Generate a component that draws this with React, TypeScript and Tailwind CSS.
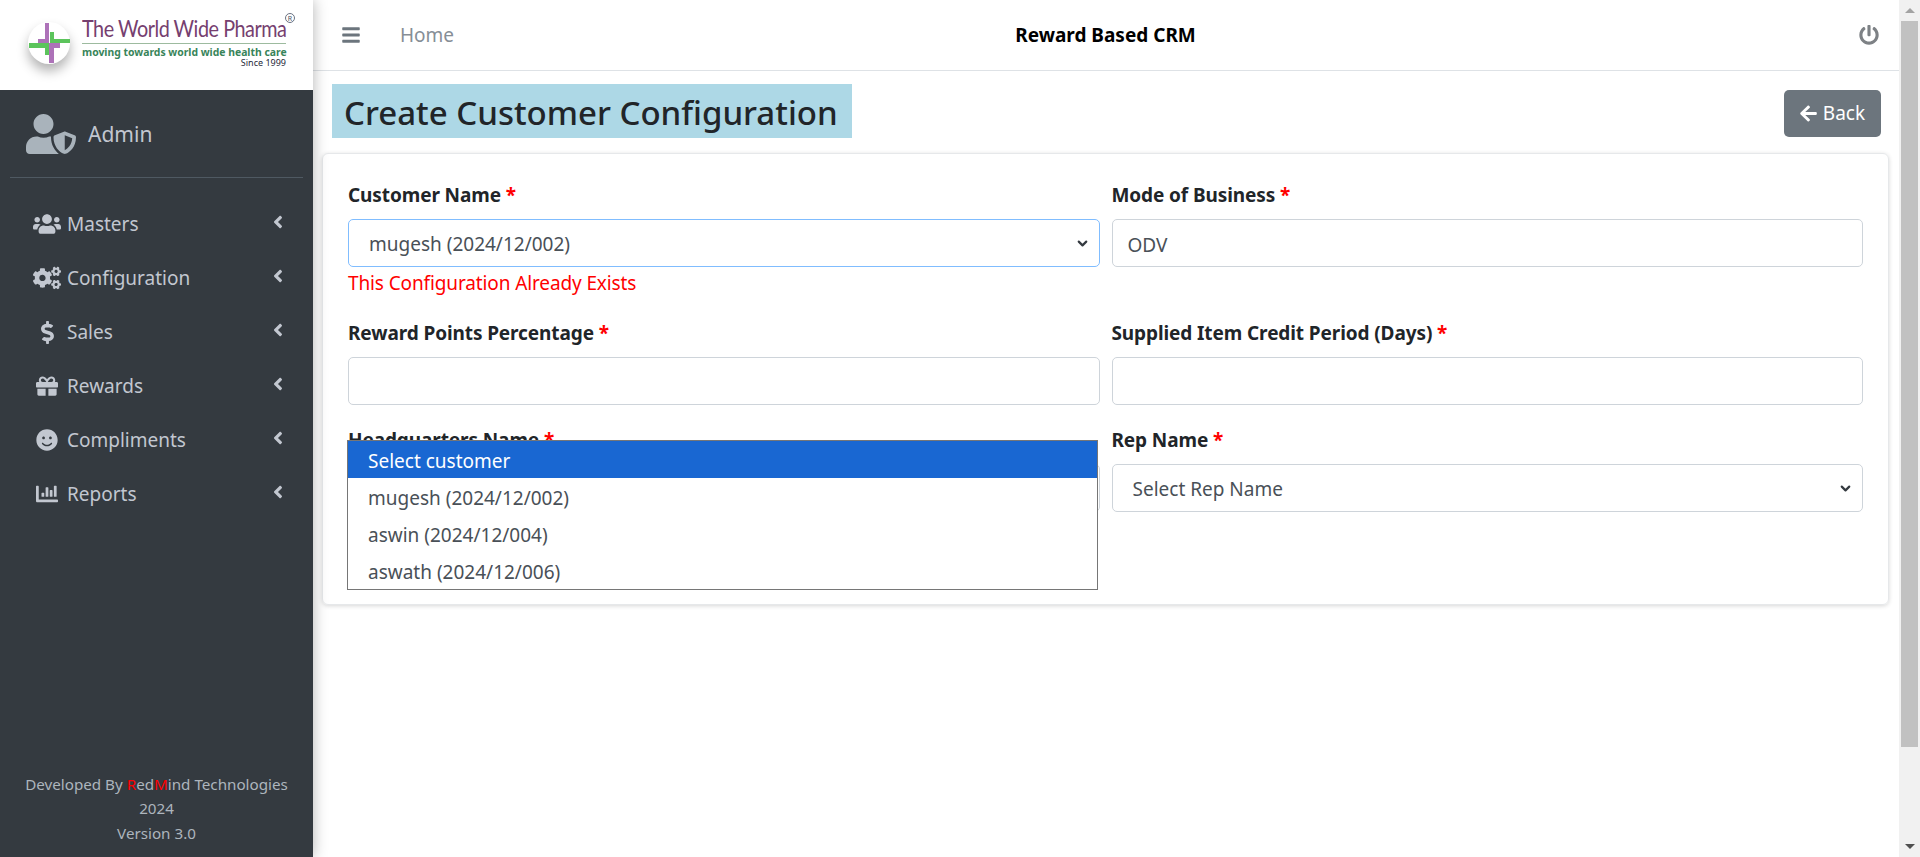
import { ChevronDown } from "lucide-react";
import {
  FaAngleLeft,
  FaArrowLeft,
  FaBars,
  FaChartBar,
  FaCogs,
  FaDollarSign,
  FaGift,
  FaPowerOff,
  FaSmile,
  FaUserShield,
  FaUsers,
} from "react-icons/fa";
import type { IconType } from "react-icons";

const NAV_ITEMS: { label: string; icon: IconType; size: string }[] = [
  { label: "Masters", icon: FaUsers, size: "text-[28px]" },
  { label: "Configuration", icon: FaCogs, size: "text-[28px]" },
  { label: "Sales", icon: FaDollarSign, size: "text-[23px]" },
  { label: "Rewards", icon: FaGift, size: "text-[22px]" },
  { label: "Compliments", icon: FaSmile, size: "text-[22px]" },
  { label: "Reports", icon: FaChartBar, size: "text-[22px]" },
];

const CUSTOMER_OPTIONS = [
  "Select customer",
  "mugesh (2024/12/002)",
  "aswin (2024/12/004)",
  "aswath (2024/12/006)",
];

function Logo() {
  return (
    <div className="flex h-[90px] shrink-0 items-start bg-white pl-[28px] pt-[15px]">
      <div className="mt-[7px] h-[42px] w-[42px] shrink-0 rounded-full bg-white shadow-[0_7px_12px_rgba(0,0,0,0.3)]">
        <svg viewBox="0 0 42 42" className="h-[42px] w-[42px]">
          <rect x="17" y="1" width="4" height="20" fill="#ad72b8" />
          <rect x="21" y="21" width="5" height="20" fill="#ad72b8" />
          <rect x="10" y="17" width="11" height="4" fill="#ad72b8" />
          <rect x="21" y="21" width="11" height="5" fill="#ad72b8" />
          <rect x="22" y="10" width="4" height="11" fill="#5cc45c" />
          <rect x="22" y="17" width="20" height="4" fill="#5cc45c" />
          <rect x="1" y="21" width="20" height="5" fill="#5cc45c" />
          <rect x="17" y="26" width="4" height="7" fill="#5cc45c" />
        </svg>
      </div>
      <div className="ml-[12px] w-[204px]">
        <div className="relative h-[26px]">
          {/* logo wordmark is a condensed face, so squeeze the closest one */}
          <span className="block origin-left scale-x-[0.843] whitespace-nowrap font-['Lato',sans-serif] text-[23.500px] leading-[26px] tracking-[-0.55px] text-[#76406f]">
            The World Wide Pharma
          </span>
          <span className="absolute -right-[9px] -top-[2px] flex h-[10px] w-[10px] items-center justify-center rounded-full border border-gray-500 text-[7px] leading-none text-gray-600">
            R
          </span>
        </div>
        <div className="mt-[2px] border-t border-[#9dbb9f] pt-[1px] text-[10.400px] font-bold leading-[14px] whitespace-nowrap text-[#38845a]">
          moving towards world wide health care
        </div>
        <div className="-mt-[1px] text-right text-[9px] leading-[9px] text-gray-800">Since 1999</div>
      </div>
    </div>
  );
}

function Sidebar() {
  return (
    <aside className="z-10 flex w-[313px] shrink-0 flex-col bg-[#343a40] shadow-[0_0_14px_rgba(0,0,0,0.3)]">
      <Logo />
      {/* User */}
      <div className="mx-[10px] flex h-[88px] items-center border-b border-[#4f5962] pl-[16px]">
        <FaUserShield className="text-[50px] text-[#a9b3bb]" />
        <span className="ml-[12px] pt-[2px] text-[21px] text-[#c2c7d0]">Admin</span>
      </div>

      {/* Nav */}
      <nav className="mt-[19px] flex flex-col">
        {NAV_ITEMS.map((item) => (
          <div key={item.label} className="flex h-[54px] items-center pl-[33px] pr-[25px] text-[#c2c7d0]">
            <span className="flex w-[28px] justify-center">
              <item.icon className={item.size} />
            </span>
            <span className="ml-[6px] flex-1 text-[19px]">{item.label}</span>
            <FaAngleLeft className="-mt-[4px] text-[20px]" />
          </div>
        ))}
      </nav>

      {/* Footer */}
      <div className="mt-auto pb-[12px] text-center text-[15.200px] leading-[24.500px] text-[#adb5bd]">
        <div>
          Developed By <span className="text-[#ff0000]">R</span>ed<span className="text-[#ff0000]">M</span>ind Technologies
        </div>
        <div>2024</div>
        <div>Version 3.0</div>
      </div>
    </aside>
  );
}

function FieldLabel({ text }: { text: string }) {
  return (
    <label className="block h-[24px] text-[19px] font-bold leading-[24px] tracking-[-0.1px] text-[#212529]">
      {text} <span className="text-[#ff0000]">*</span>
    </label>
  );
}

function SelectBox({ value, focused }: { value?: string; focused?: boolean }) {
  return (
    <div
      className={`flex h-[48px] items-center justify-between rounded-[5px] border bg-white pl-[20px] pr-[9px] text-[19px] text-[#495057] ${
        focused ? "border-[#80bdff]" : "border-[#ced4da]"
      }`}
    >
      <span className="pt-[2px]">{value}</span>
      <ChevronDown size={15} strokeWidth={3.500} className="text-[#343a40]" />
    </div>
  );
}

function TextBox({ value }: { value?: string }) {
  return (
    <input
      readOnly
      value={value ?? ""}
      className="block h-[48px] w-full rounded-[5px] border border-[#ced4da] bg-white px-[15px] pt-[3px] text-[19px] text-[#495057] outline-none"
    />
  );
}

function CustomerDropdown() {
  return (
    <div className="absolute -left-[1px] right-[2px] top-[12px] z-20 border border-[#767676] bg-white text-[19px] text-[#495057]">
      {CUSTOMER_OPTIONS.map((option, index) => (
        <div
          key={option}
          className={`flex h-[37px] items-center pl-[20px] pt-[3px] ${index === 0 ? "bg-[#1967d2] text-white" : ""}`}
        >
          {option}
        </div>
      ))}
    </div>
  );
}

export default function App() {
  return (
    <div className="flex h-[857px] w-full overflow-hidden bg-white font-['Noto_Sans','Open_Sans',sans-serif]">
      <Sidebar />

      <main className="flex min-w-0 flex-1 flex-col">
        {/* Top bar */}
        <header className="grid h-[71px] shrink-0 grid-cols-[1fr_auto_1fr] items-center border-b border-[#dee2e6] pl-[28px] pr-[20px]">
          <div className="flex items-center">
            <FaBars className="text-[20px] text-[#6c757d]" />
            <span className="ml-[39px] text-[19px] text-[#868e96]">Home</span>
          </div>
          <div className="pr-[9px] text-[19px] font-bold text-black">Reward Based CRM</div>
          <FaPowerOff className="justify-self-end text-[20px] text-[#7d8185]" />
        </header>

        {/* Title row */}
        <div className="mt-[13px] flex h-[54px] shrink-0 items-start justify-between pl-[19px] pr-[18px]">
          <h1 className="flex h-[54px] w-[520px] items-center bg-[#add8e6] pl-[12px] pt-[3px] text-[33px] font-medium whitespace-nowrap text-[#212529]">
            Create Customer Configuration
          </h1>
          <button className="mt-[6px] flex h-[47px] w-[97px] items-center justify-center gap-[5px] rounded-[5px] bg-[#6c757d] pr-[1px] text-[19px] text-white">
            <FaArrowLeft className="text-[19px]" />
            Back
          </button>
        </div>

        {/* Form card */}
        <section className="ml-[9px] mr-[10px] mt-[15px] h-[452px] shrink-0 rounded-[6px] border border-[#e6e8ea] px-[25px] pt-[29px] shadow-[0_1px_4px_rgba(0,0,0,0.16)]">
          <div className="grid grid-cols-2 gap-x-[12px]">
            <div className="h-[138px]">
              <FieldLabel text="Customer Name" />
              <div className="mt-[12px]">
                <SelectBox value="mugesh (2024/12/002)" focused />
              </div>
              <p className="mt-[4px] text-[19px] leading-[24px] tracking-[-0.12px] text-[#ff0000]">
                This Configuration Already Exists
              </p>
            </div>
            <div className="h-[138px]">
              <FieldLabel text="Mode of Business" />
              <div className="mt-[12px]">
                <TextBox value="ODV" />
              </div>
            </div>
            <div className="h-[107px]">
              <FieldLabel text="Reward Points Percentage" />
              <div className="mt-[12px]">
                <TextBox />
              </div>
            </div>
            <div className="h-[107px]">
              <FieldLabel text="Supplied Item Credit Period (Days)" />
              <div className="mt-[12px]">
                <TextBox />
              </div>
            </div>
            <div className="relative">
              <FieldLabel text="Headquarters Name" />
              <div className="mt-[12px]">
                <SelectBox />
              </div>
              <CustomerDropdown />
            </div>
            <div>
              <FieldLabel text="Rep Name" />
              <div className="mt-[12px]">
                <SelectBox value="Select Rep Name" />
              </div>
            </div>
          </div>
        </section>
      </main>

      {/* Scrollbar */}
      <div className="flex w-[21px] shrink-0 flex-col items-center bg-[#f1f1f1]">
        <div className="flex h-[21px] w-full items-center justify-center">
          <div className="h-0 w-0 border-x-[5px] border-b-[5px] border-x-transparent border-b-[#a3a3a3]" />
        </div>
        <div className="h-[726px] w-[17px] bg-[#c1c1c1]" />
        <div className="mt-auto flex h-[21px] w-full items-center justify-center">
          <div className="h-0 w-0 border-x-[5px] border-t-[5px] border-x-transparent border-t-[#505050]" />
        </div>
      </div>
    </div>
  );
}
